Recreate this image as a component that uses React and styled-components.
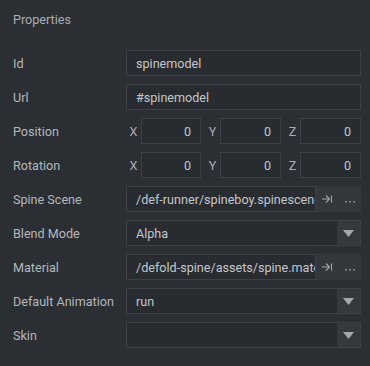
import React from 'react'
import styled, { createGlobalStyle } from 'styled-components'

const GlobalStyle = createGlobalStyle`
    html, body {
        margin: 0;
        padding: 0;
        background: #2b2e33;
    }
    body {
        font-family: Roboto, "Noto Sans", sans-serif;
        font-size: 12.6px;
        color: #b4b8bc;
    }
`

const Panel = styled.div`
    width: 370px;
    height: 366px;
    box-sizing: border-box;
    padding: 10px 9px 0 13px;
    background: #2b2e33;
`

const Title = styled.div`
    height: 20px;
    line-height: 20px;
    color: #a9adb1;
    margin-bottom: 20px;
`

const Grid = styled.div`
    display: grid;
    grid-template-columns: 113px 235px;
    grid-auto-rows: 26px;
    row-gap: 8px;
    align-items: center;
`

const Label = styled.div`
    color: #b4b8bc;
    white-space: nowrap;
`

const Box = styled.div`
    height: 26px;
    box-sizing: border-box;
    border: 1px solid #3d4045;
    background: #282b2f;
    color: #c3c7cb;
    display: flex;
    align-items: center;
    padding: 0 9px;
    overflow: hidden;
    white-space: nowrap;
    justify-content: ${p => (p.$num ? 'flex-end' : 'flex-start')};
    flex: 1;
    min-width: 0;
`

const Vector = styled.div`
    display: flex;
    gap: 4px;
`

const Axis = styled.div`
    display: flex;
    align-items: center;
    flex: ${p => (p.$first ? '0 0 75px' : '1')};
`

const AxisLabel = styled.span`
    width: 15px;
    flex: 0 0 15px;
    text-align: center;
    color: #a9adb1;
`

const Resource = styled.div`
    display: flex;
    height: 26px;
`

const ButtonGroup = styled.div`
    display: flex;
    align-items: center;
    justify-content: space-around;
    width: 45px;
    flex: 0 0 45px;
    background: #34373b;
    color: #a0a4a8;
`

const Select = styled.div`
    display: flex;
    height: 26px;
    box-sizing: border-box;
    border: 1px solid #3d4045;
    background: #282b2f;
`

const SelectValue = styled.div`
    flex: 1;
    display: flex;
    align-items: center;
    padding: 0 9px;
    color: #c3c7cb;
`

const Arrow = styled.div`
    width: 23px;
    flex: 0 0 23px;
    background: #35383c;
    display: flex;
    align-items: center;
    justify-content: center;
`

const JumpIcon = () => (
    <svg width="12" height="10" viewBox="0 0 12 10">
        <path d="M1 5h7M5 1.5L8.5 5 5 8.5M10.5 1.5v7" stroke="#a0a4a8" strokeWidth="1.1" fill="none" />
    </svg>
)

const Dots = () => (
    <svg width="12" height="10" viewBox="0 0 12 10">
        <rect x="1" y="7" width="1.5" height="1.5" fill="#a0a4a8" />
        <rect x="5.2" y="7" width="1.5" height="1.5" fill="#a0a4a8" />
        <rect x="9.4" y="7" width="1.5" height="1.5" fill="#a0a4a8" />
    </svg>
)

const Caret = () => (
    <svg width="11" height="7" viewBox="0 0 11 7">
        <path d="M0 0h11L5.5 7z" fill="#a4a8ac" />
    </svg>
)

function VectorField({ values }) {
    return (
        <Vector>
            {['X', 'Y', 'Z'].map((a, i) => (
                <Axis key={a} $first={i === 0}>
                    <AxisLabel>{a}</AxisLabel>
                    <Box $num>{values[i]}</Box>
                </Axis>
            ))}
        </Vector>
    )
}

function ResourceField({ value }) {
    return (
        <Resource>
            <Box>{value}</Box>
            <ButtonGroup>
                <JumpIcon />
                <Dots />
            </ButtonGroup>
        </Resource>
    )
}

function SelectField({ value }) {
    return (
        <Select>
            <SelectValue>{value}</SelectValue>
            <Arrow>
                <Caret />
            </Arrow>
        </Select>
    )
}

export default function App() {
    return (
        <Panel>
            <GlobalStyle />
            <Title>Properties</Title>
            <Grid>
                <Label>Id</Label>
                <Box>spinemodel</Box>
                <Label>Url</Label>
                <Box>#spinemodel</Box>
                <Label>Position</Label>
                <VectorField values={[0, 0, 0]} />
                <Label>Rotation</Label>
                <VectorField values={[0, 0, 0]} />
                <Label>Spine Scene</Label>
                <ResourceField value="/def-runner/spineboy.spinescene" />
                <Label>Blend Mode</Label>
                <SelectField value="Alpha" />
                <Label>Material</Label>
                <ResourceField value="/defold-spine/assets/spine.material" />
                <Label>Default Animation</Label>
                <SelectField value="run" />
                <Label>Skin</Label>
                <SelectField value="" />
            </Grid>
        </Panel>
    )
}
